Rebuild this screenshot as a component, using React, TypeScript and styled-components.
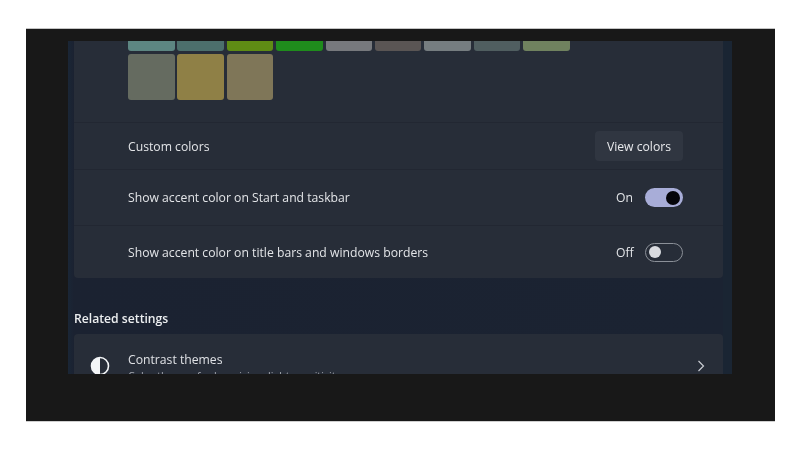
import React from 'react';
import styled, { createGlobalStyle } from 'styled-components';

const GlobalStyle = createGlobalStyle`
  html, body {
    margin: 0;
    padding: 0;
    background: #fff;
  }
  #root {
    width: 800px;
    height: 450px;
    overflow: hidden;
  }
`;

const topSwatches = ['#5d8682', '#4c6f6c', '#5f8c14', '#1f8c1c', '#77797d', '#5a5554', '#767d80', '#505e60', '#70825f'];
const bottomSwatches = ['#656b60', '#8f8046', '#7f7658'];

function App() {
  return (
    <Page>
      <GlobalStyle />
      <Frame>
        <SettingsWindow>
          <Card>
            <SwatchRow>
              <SwatchGrid>
                {topSwatches.map((c) => <Swatch key={c} $color={c} $cut />)}
                {bottomSwatches.map((c) => <Swatch key={c} $color={c} />)}
              </SwatchGrid>
            </SwatchRow>
            <Row $height={47}>
              <Label>Custom colors</Label>
              <ViewButton>View colors</ViewButton>
            </Row>
            <Row $height={56}>
              <Label>Show accent color on Start and taskbar</Label>
              <ToggleGroup>
                <ToggleText>On</ToggleText>
                <Toggle $on><Knob $on /></Toggle>
              </ToggleGroup>
            </Row>
            <Row $height={53}>
              <Label>Show accent color on title bars and windows borders</Label>
              <ToggleGroup>
                <ToggleText>Off</ToggleText>
                <Toggle><Knob /></Toggle>
              </ToggleGroup>
            </Row>
          </Card>
          <SectionTitle>Related settings</SectionTitle>
          <LinkCard>
            <IconSlot>
              <svg width="20" height="20" viewBox="0 0 20 20">
                <circle cx="10" cy="10" r="8.5" fill="none" stroke="#f4f6f8" strokeWidth="1.6" />
                <path d="M10 1.5a8.5 8.5 0 0 0 0 17z" fill="#f4f6f8" />
              </svg>
            </IconSlot>
            <LinkText>
              <LinkTitle>Contrast themes</LinkTitle>
              <LinkSub>Color themes for low vision, light sensitivity</LinkSub>
            </LinkText>
            <Chevron width="8" height="12" viewBox="0 0 8 12">
              <path d="M1.5 1 L6.5 6 L1.5 11" fill="none" stroke="#c9ccd2" strokeWidth="1.2" />
            </Chevron>
          </LinkCard>
        </SettingsWindow>
      </Frame>
    </Page>
  );
}

export default App;

const Page = styled.div`
  width: 800px;
  height: 450px;
  padding: 28px 25px 0 26px;
  box-sizing: border-box;
  font-family: "Open Sans", "Noto Sans", sans-serif;
`;

const Frame = styled.div`
  height: 394px;
  box-sizing: border-box;
  padding: 12px 43px 47px 42px;
  background: #181818;
  border-top: 1px solid #c4c4c4;
  border-bottom: 1px solid #cfcfcf;
  filter: blur(0.45px);
`;

const SettingsWindow = styled.div`
  height: 100%;
  box-sizing: border-box;
  padding: 0 9px 0 6px;
  overflow: hidden;
  background: linear-gradient(90deg, #1a2636 0, #1b2231 6px, #1b2332 655px, #1a2533 655px);
`;

const Card = styled.div`
  background: #272d38;
  border-radius: 0 0 4px 4px;
`;

const SwatchRow = styled.div`
  height: 81px;
  box-sizing: border-box;
  padding-left: 54px;
`;

const SwatchGrid = styled.div`
  display: grid;
  grid-template-columns: repeat(9, 46.5px);
  grid-template-rows: 10px 46px;
  gap: 3px 2.9px;
`;

const Swatch = styled.div<{ $color: string; $cut?: boolean }>`
  background: ${(p) => p.$color};
  border-radius: ${(p) => (p.$cut ? '0 0 3px 3px' : '3px')};
`;

const Row = styled.div<{ $height: number }>`
  height: ${(p) => p.$height}px;
  box-sizing: border-box;
  display: flex;
  align-items: center;
  justify-content: space-between;
  padding: 0 40px 0 54px;
  border-top: 1px solid #222732;
`;

const Label = styled.span`
  font-size: 12.2px;
  color: #e3e5e8;
`;

const ViewButton = styled.button`
  width: 88px;
  height: 30px;
  padding: 0;
  border: 0;
  border-radius: 4px;
  background: #303641;
  color: #e8e9ec;
  font-family: inherit;
  font-size: 12.2px;
`;

const ToggleGroup = styled.div`
  display: flex;
  align-items: center;
`;

const ToggleText = styled.span`
  width: 29px;
  font-size: 12.2px;
  color: #e3e5e8;
`;

const Toggle = styled.div<{ $on?: boolean }>`
  width: 38px;
  height: 19px;
  box-sizing: border-box;
  display: flex;
  align-items: center;
  justify-content: ${(p) => (p.$on ? 'flex-end' : 'flex-start')};
  padding: 0 3px;
  border-radius: 10px;
  background: ${(p) => (p.$on ? '#a8add8' : 'transparent')};
  border: ${(p) => (p.$on ? '0' : '1px solid #8b9098')};
`;

const Knob = styled.div<{ $on?: boolean }>`
  width: ${(p) => (p.$on ? 14 : 12)}px;
  height: ${(p) => (p.$on ? 14 : 12)}px;
  border-radius: 50%;
  background: ${(p) => (p.$on ? '#05050a' : '#d9dbe0')};
`;

const SectionTitle = styled.div`
  margin: 32px 0 7px;
  height: 17px;
  line-height: 17px;
  font-size: 12.2px;
  font-weight: 600;
  color: #eceef0;
`;

const LinkCard = styled.div`
  height: 63px;
  display: flex;
  align-items: center;
  background: #272d38;
  border-radius: 4px 4px 0 0;
  padding-right: 18px;
`;

const IconSlot = styled.div`
  width: 54px;
  display: flex;
  justify-content: center;
  padding-right: 2px;
  box-sizing: border-box;
`;

const LinkText = styled.div`
  flex: 1;
  display: flex;
  flex-direction: column;
  padding-top: 3px;
`;

const LinkTitle = styled.span`
  font-size: 12.2px;
  line-height: 16px;
  margin-bottom: 1px;
  color: #dfe1e5;
`;

const LinkSub = styled.span`
  font-size: 10.6px;
  line-height: 14px;
  color: #a9adb4;
`;

const Chevron = styled.svg`
  display: block;
`;
